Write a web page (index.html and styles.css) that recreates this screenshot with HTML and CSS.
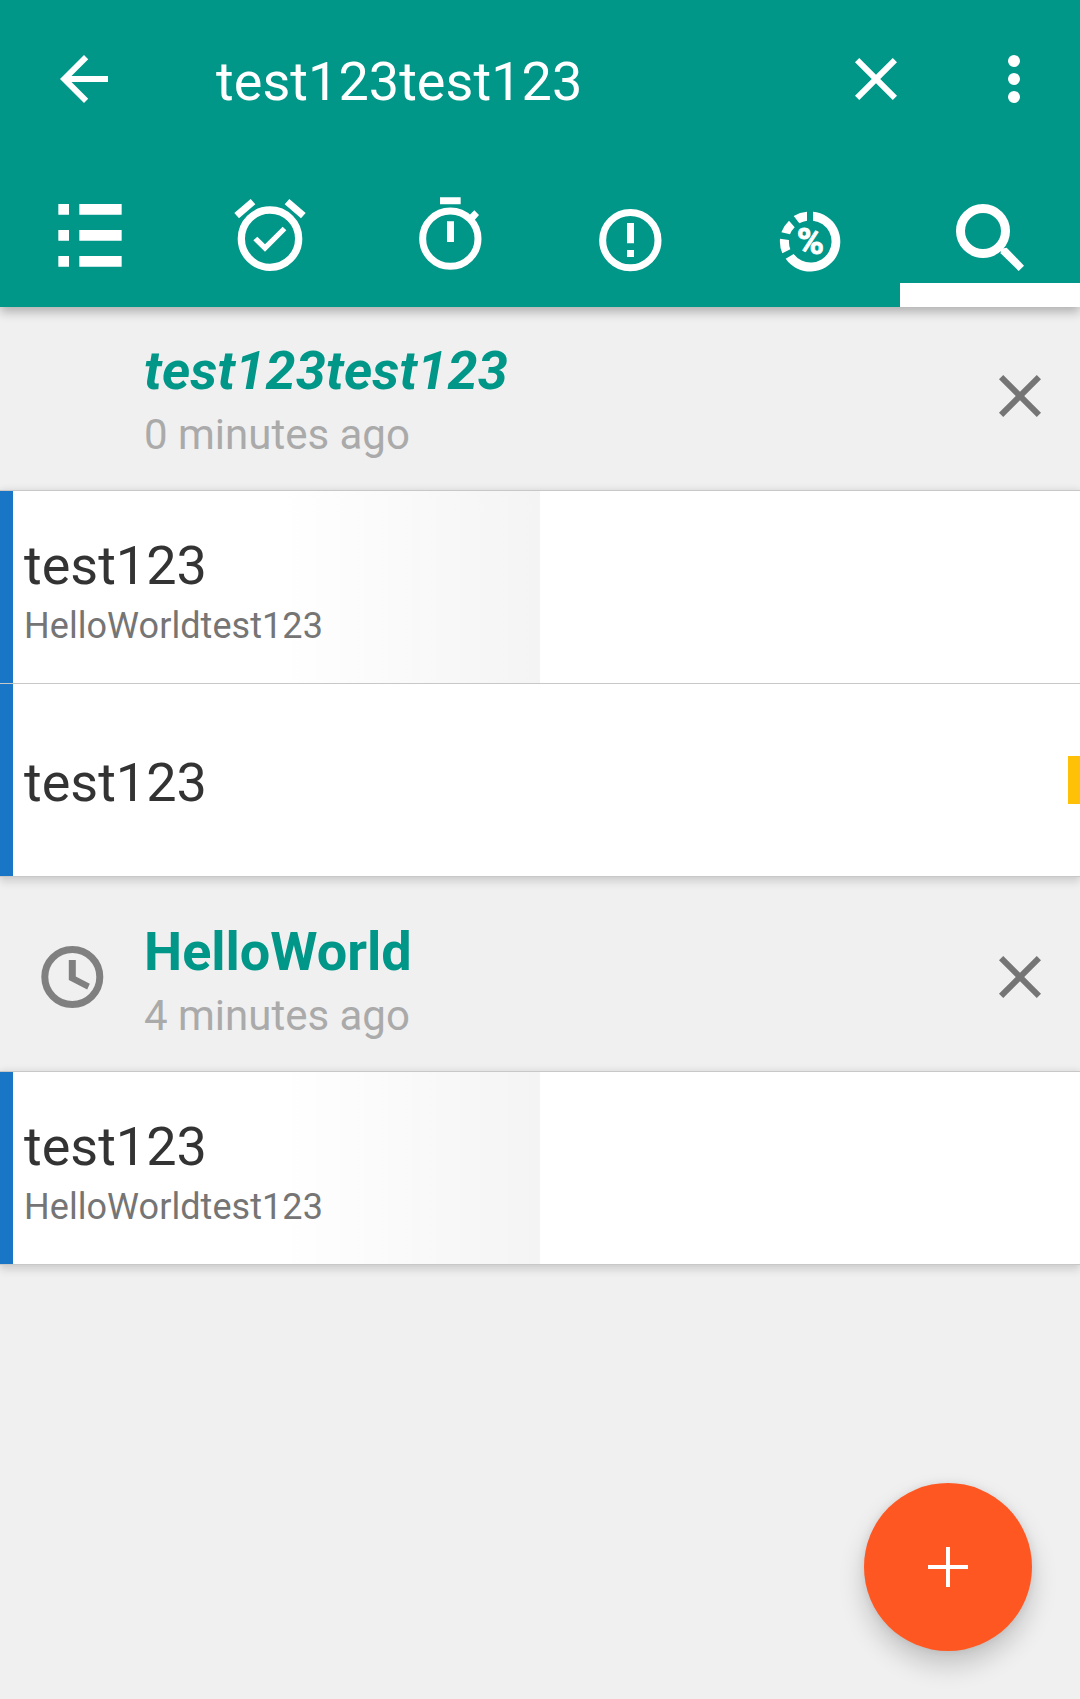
FILE: index.html
```html
<!DOCTYPE html>
<html lang="en">
<head>
<meta charset="utf-8">
<title>Search</title>
<link rel="stylesheet" href="styles.css">
</head>
<body>
<div class="app">
  <header class="app-bar">
    <div class="toolbar">
      <svg class="icon" viewBox="0 0 24 24"><path d="M20 11H7.83l5.59-5.59L12 4l-8 8 8 8 1.41-1.41L7.83 13H20v-2z"/></svg>
      <div class="query">test123test123</div>
      <svg class="icon clear" viewBox="0 0 24 24"><path d="M19 6.41L17.59 5 12 10.59 6.41 5 5 6.41 10.59 12 5 17.59 6.41 19 12 13.41 17.59 19 19 17.59 13.41 12z"/></svg>
      <svg class="icon" viewBox="0 0 24 24"><circle cx="12" cy="6" r="2"/><circle cx="12" cy="12" r="2"/><circle cx="12" cy="18" r="2"/></svg>
    </div>
    <nav class="tabs">
      <div class="tab">
        <svg viewBox="0 -36 540 375"><path d="M175 102h32v32h-32zM238 102h127v32H238zM175 180h32v32h-32zM238 180h127v32H238zM175 258h32v32h-32zM238 258h127v32H238z"/></svg>
      </div>
      <div class="tab">
        <svg viewBox="0 -36 540 375"><circle class="ring" cx="270" cy="206" r="86" stroke-width="22"/><path d="M163 129l49-42 14 16-49 42zM377 129l-49-42-14 16 49 42zM220 211l12-11 23 23 53-53 11 11-64 64z"/></svg>
      </div>
      <div class="tab">
        <svg viewBox="0 -36 540 375"><circle class="ring" cx="271" cy="206" r="83" stroke-width="21"/><path d="M240 82h62v21h-62zM261 154h21v62h-21zM328 136l15-15 14 14-15 17z"/></svg>
      </div>
      <div class="tab">
        <svg viewBox="0 -36 540 375"><circle class="ring" cx="271" cy="210.5" r="83" stroke-width="21"/><path d="M261 159h21v61h-21zM261 240h21v21h-21z"/></svg>
      </div>
      <div class="tab">
        <svg viewBox="0 -36 540 375"><path d="M279 125A90 90 0 1 1 197 266L221 252A63 63 0 1 0 279 152zM187 250A90 90 0 0 1 180 206L207 210A63 63 0 0 0 211 238zM184 187A90 90 0 0 1 207 152L224 172A63 63 0 0 0 210 193zM221 138A90 90 0 0 1 261 125L261 152A63 63 0 0 0 238 160z"/><text class="percent" x="230" y="251" textLength="82" lengthAdjust="spacingAndGlyphs">%</text></svg>
      </div>
      <div class="tab active">
        <svg viewBox="0 -36 540 375"><circle class="ring" cx="249" cy="183" r="67.5" stroke-width="27"/><path d="M302 236l18-3 52 54-16 16-54-53z"/></svg>
      </div>
    </nav>
  </header>

  <main>
    <section>
      <div class="group first">
        <div class="group-icon"></div>
        <div class="group-text">
          <div class="group-title current">test123test123</div>
          <div class="group-time">0 minutes ago</div>
        </div>
        <svg class="icon dismiss" viewBox="0 0 24 24"><path d="M19 6.41L17.59 5 12 10.59 6.41 5 5 6.41 10.59 12 5 17.59 6.41 19 12 13.41 17.59 19 19 17.59 13.41 12z"/></svg>
      </div>
      <div class="card">
        <div class="row shaded">
          <div class="row-title">test123</div>
          <div class="row-note">HelloWorldtest123</div>
        </div>
        <div class="row flagged">
          <div class="row-title">test123</div>
        </div>
      </div>
    </section>

    <section>
      <div class="group">
        <div class="group-icon">
          <svg viewBox="0 0 72 72"><circle class="ring" cx="36.3" cy="36" r="27.5" stroke-width="7"/><path d="M32.8 19h7v16.5l14 7.2-2.6 5.8L32.8 39z"/></svg>
        </div>
        <div class="group-text">
          <div class="group-title">HelloWorld</div>
          <div class="group-time">4 minutes ago</div>
        </div>
        <svg class="icon dismiss" viewBox="0 0 24 24"><path d="M19 6.41L17.59 5 12 10.59 6.41 5 5 6.41 10.59 12 5 17.59 6.41 19 12 13.41 17.59 19 19 17.59 13.41 12z"/></svg>
      </div>
      <div class="card">
        <div class="row shaded">
          <div class="row-title">test123</div>
          <div class="row-note">HelloWorldtest123</div>
        </div>
      </div>
    </section>
  </main>

  <div class="fab">
    <svg viewBox="0 0 40 40"><path d="M18 0h4v18h18v4H22v18h-4V22H0v-4h18z"/></svg>
  </div>
</div>
</body>
</html>
```
FILE: styles.css
```css
* { box-sizing: border-box; }

body {
  margin: 0;
  font-family: Roboto, "Liberation Sans", sans-serif;
}

svg { display: block; fill: currentColor; }

.ring { fill: none; stroke: currentColor; }

.app {
  position: relative;
  width: 1080px;
  height: 1699px;
  overflow: hidden;
  background: #f0f0f0;
}

.icon { width: 72px; height: 72px; flex: none; }

/* App bar */
.app-bar {
  position: relative;
  z-index: 2;
  height: 307px;
  background: #009688;
  color: #fff;
  box-shadow: 0 5px 10px rgba(0, 0, 0, 0.27);
}

.toolbar {
  display: flex;
  align-items: center;
  height: 158px;
  padding: 0 30px 0 48px;
}

.query {
  flex: 1;
  padding: 6px 0 0 96px;
  font-size: 54px;
  line-height: 64px;
  letter-spacing: 0.04px;
}

.clear { margin-right: 66px; }

.tabs {
  display: grid;
  grid-template-columns: repeat(6, 180px);
  height: 149px;
}

.tab { border-bottom: 24px solid transparent; }
.tab svg { width: 180px; height: 125px; }
.tab.active { border-bottom-color: #fff; }

.percent {
  font-size: 110px;
  font-weight: 700;
  stroke: currentColor;
  stroke-width: 2.5px;
}

/* Search groups */
.group {
  display: flex;
  align-items: flex-start;
  height: 194px;
  padding: 43px 24px 0 36px;
}

.group.first { height: 183px; padding-top: 32px; }

.group-icon {
  width: 72px;
  height: 72px;
  margin: 21px 36px 0 0;
  color: #808080;
}

.group-text { flex: 1; }

.group-title {
  color: #009688;
  font-size: 54px;
  font-weight: 700;
  line-height: 64px;
}

.group-title.current { font-style: italic; letter-spacing: 0.17px; }

.group-time {
  margin-top: 7px;
  color: #aaa;
  font-size: 42px;
  line-height: 50px;
}

.dismiss { margin-top: 21px; color: #757575; }

/* Result cards */
.card {
  position: relative;
  border-top: 1px solid #c8c8c8;
  border-bottom: 1px solid #c8c8c8;
  background: #fff;
  box-shadow: 0 7px 7px rgba(0, 0, 0, 0.08), 0 0 7px rgba(0, 0, 0, 0.12);
}

.row {
  display: flex;
  flex-direction: column;
  justify-content: center;
  height: 192px;
  padding: 7px 0 0 24px;
  background: linear-gradient(#1976c6, #1976c6) left / 13px 100% no-repeat;
}

.row + .row { border-top: 1px solid #c8c8c8; height: 193px; }

.row.shaded {
  background:
    linear-gradient(#1976c6, #1976c6) left / 13px 100% no-repeat,
    linear-gradient(90deg, #fff 52%, #f4f4f4) left / 540px 100% no-repeat;
}

.row.flagged {
  padding-top: 5px;
  background:
    linear-gradient(#1976c6, #1976c6) left / 13px 100% no-repeat,
    linear-gradient(#ffc107, #ffc107) right / 12px 48px no-repeat;
}

.row-title { color: #333; font-size: 54px; line-height: 64px; }

.row-note {
  margin-top: 7px;
  color: #757575;
  font-size: 36px;
  line-height: 42px;
  letter-spacing: 0.06px;
}

/* Floating action button */
.fab {
  position: absolute;
  right: 48px;
  bottom: 48px;
  display: grid;
  place-items: center;
  width: 168px;
  height: 168px;
  border-radius: 50%;
  background: #ff5722;
  color: #fff;
  box-shadow: 0 14px 26px rgba(0, 0, 0, 0.19), 0 0 8px rgba(0, 0, 0, 0.08);
}

.fab svg { width: 40px; height: 40px; }
```
